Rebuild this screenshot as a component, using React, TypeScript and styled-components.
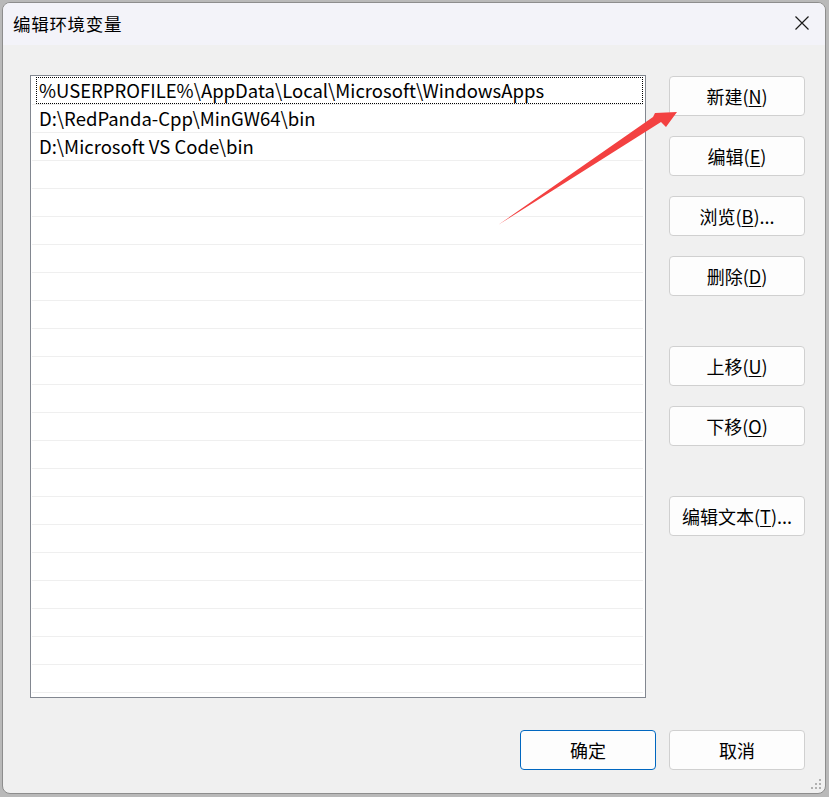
import React from "react";
import styled, { createGlobalStyle } from "styled-components";

const Global = createGlobalStyle`
  html, body { margin: 0; padding: 0; }
  body {
    width: 829px;
    height: 797px;
    background: #b9b9b9;
    overflow: hidden;
    font-family: "Noto Sans CJK SC", "Noto Sans", sans-serif;
  }
  #root { width: 829px; height: 797px; }
`;

const Desktop = styled.div`
  width: 829px;
  height: 797px;
  padding: 2px 2px 2px 2px;
  box-sizing: border-box;
`;

const Window = styled.div`
  position: relative;
  width: 824px;
  height: 792px;
  box-sizing: border-box;
  border: 1px solid #8d8d8d;
  border-radius: 8px;
  overflow: hidden;
  background: #f0f0f0;
  display: flex;
  flex-direction: column;
`;

const TitleBar = styled.div`
  height: 42px;
  flex: none;
  background: #f3f3f9;
  display: flex;
  align-items: center;
  justify-content: space-between;
  padding: 0 14px 0 10px;
`;

const Title = styled.div`
  font-size: 17.5px;
  color: #000;
  letter-spacing: 0.7px;
  margin-top: -2px;
`;

const CloseBtn = styled.div`
  width: 18px;
  height: 18px;
  display: flex;
  align-items: center;
  justify-content: center;
  margin-top: -2px;
`;

const Body = styled.div`
  flex: 1;
  display: flex;
  flex-direction: column;
  padding: 30px 20px 0 27px;
`;

const MainRow = styled.div`
  display: flex;
  align-items: flex-start;
`;

const ListBox = styled.div`
  width: 616px;
  height: 623px;
  box-sizing: border-box;
  border: 1px solid #828790;
  background: #fff;
  padding: 1px 2px 0 1px;
  overflow: hidden;
`;

const Row = styled.div`
  height: 28px;
  box-sizing: border-box;
  border-bottom: 1px solid #efefef;
  display: flex;
  align-items: stretch;
`;

const RowText = styled.div<{ $focused?: boolean }>`
  flex: 1;
  margin-left: 4px;
  padding: 0 0 1px 3px;
  display: flex;
  align-items: center;
  font-size: 18.5px;
  color: #000;
  white-space: nowrap;
  box-sizing: border-box;
  outline: ${(p) => (p.$focused ? "1px dotted #000" : "none")};
  outline-offset: -1px;
`;

const SideColumn = styled.div`
  display: flex;
  flex-direction: column;
  margin-left: 23px;
  padding-top: 1px;
`;

const Button = styled.button<{ $gap?: number; $default?: boolean }>`
  width: 136px;
  height: 40px;
  margin-top: ${(p) => p.$gap ?? 0}px;
  box-sizing: border-box;
  background: #fdfdfd;
  border: 1px solid ${(p) => (p.$default ? "#0067c0" : "#d0d0d0")};
  border-radius: 4px;
  font-family: "Noto Sans CJK SC", "Noto Sans", sans-serif;
  font-size: 18px;
  color: #000;
  padding: 0 0 1px 0;
  display: flex;
  align-items: center;
  justify-content: center;
  cursor: default;
`;

const Key = styled.span`
  text-decoration: underline;
  text-underline-offset: 2px;
`;

const Footer = styled.div`
  display: flex;
  justify-content: flex-end;
  gap: 13px;
  margin-top: 32px;
`;

const Overlay = styled.svg`
  position: absolute;
  left: 0;
  top: 0;
  pointer-events: none;
`;

const Grip = styled.svg`
  position: absolute;
  right: 3px;
  bottom: 3px;
`;

const entries = [
  "%USERPROFILE%\\AppData\\Local\\Microsoft\\WindowsApps",
  "D:\\RedPanda-Cpp\\MinGW64\\bin",
  "D:\\Microsoft VS Code\\bin",
];

const rows = Array.from({ length: 22 }, (_, i) => entries[i] ?? "");

export default function App() {
  return (
    <>
      <Global />
      <Desktop>
        <Window>
          <TitleBar>
            <Title>编辑环境变量</Title>
            <CloseBtn>
              <svg width="16" height="16" viewBox="0 0 16 16">
                <path d="M1.5 1.5 L14.5 14.5 M14.5 1.5 L1.5 14.5" stroke="#1a1a1a" strokeWidth="1.2" fill="none" />
              </svg>
            </CloseBtn>
          </TitleBar>
          <Body>
            <MainRow>
              <ListBox>
                {rows.map((t, i) => (
                  <Row key={i}>
                    <RowText $focused={i === 0}>{t}</RowText>
                  </Row>
                ))}
              </ListBox>
              <SideColumn>
                <Button>新建(<Key>N</Key>)</Button>
                <Button $gap={20}>编辑(<Key>E</Key>)</Button>
                <Button $gap={20}>浏览(<Key>B</Key>)...</Button>
                <Button $gap={20}>删除(<Key>D</Key>)</Button>
                <Button $gap={50}>上移(<Key>U</Key>)</Button>
                <Button $gap={20}>下移(<Key>O</Key>)</Button>
                <Button $gap={50}>编辑文本(<Key>T</Key>)...</Button>
              </SideColumn>
            </MainRow>
            <Footer>
              <Button $default>确定</Button>
              <Button>取消</Button>
            </Footer>
          </Body>
          <Overlay width="824" height="792" viewBox="2 2 824 792">
            <path d="M497 224 L652 116 L654 112 L676 111 L665 126 L660 121 Z" fill="#f34141" />
          </Overlay>
          <Grip width="11" height="11" viewBox="0 0 11 11">
            <rect x="8" y="0" width="2" height="2" fill="#b0b0b0" />
            <rect x="4" y="4" width="2" height="2" fill="#b0b0b0" />
            <rect x="8" y="4" width="2" height="2" fill="#b0b0b0" />
            <rect x="0" y="8" width="2" height="2" fill="#b0b0b0" />
            <rect x="4" y="8" width="2" height="2" fill="#b0b0b0" />
            <rect x="8" y="8" width="2" height="2" fill="#b0b0b0" />
          </Grip>
        </Window>
      </Desktop>
    </>
  );
}
